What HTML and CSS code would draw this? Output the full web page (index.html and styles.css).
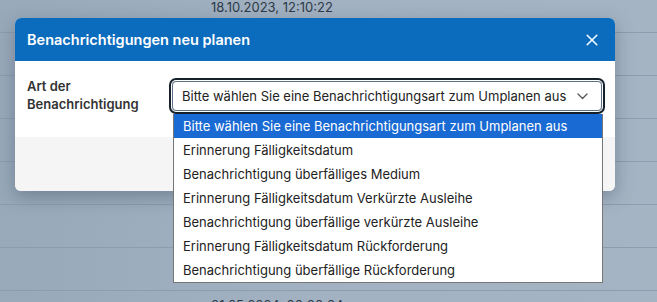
FILE: index.html
```html
<!DOCTYPE html>
<html lang="de">
<head>
<meta charset="utf-8">
<title>Benachrichtigungen neu planen</title>
<link rel="stylesheet" href="styles.css">
</head>
<body>
<div class="backdrop">
  <div class="row first"><span class="cell-date">18.10.2023, 12:10:22</span></div>
  <div class="row"></div>
  <div class="row"></div>
  <div class="row"></div>
  <div class="row"></div>
  <div class="row"></div>
  <div class="row"></div>
  <div class="row last"><span class="cell-date">01.05.2024, 00:00:04</span></div>
</div>

<div class="modal">
  <div class="modal-header">
    <h2 class="modal-title">Benachrichtigungen neu planen</h2>
    <svg class="close" width="12" height="12" viewBox="0 0 12 12"><path d="M1.2 1.2L10.8 10.8M10.8 1.2L1.2 10.8" stroke="#fff" stroke-width="1.5" stroke-linecap="round"/></svg>
  </div>
  <div class="modal-body">
    <label class="field-label">Art der<br>Benachrichtigung</label>
    <div class="select">
      <span class="select-text">Bitte wählen Sie eine Benachrichtigungsart zum Umplanen aus</span>
      <svg class="chevron" width="11" height="7" viewBox="0 0 11 7"><path d="M1 1L5.5 5.5L10 1" fill="none" stroke="#555" stroke-width="1.3" stroke-linecap="round" stroke-linejoin="round"/></svg>
    </div>
  </div>
  <div class="modal-footer"></div>
</div>

<ul class="options">
  <li class="option selected">Bitte wählen Sie eine Benachrichtigungsart zum Umplanen aus</li>
  <li class="option">Erinnerung Fälligkeitsdatum</li>
  <li class="option">Benachrichtigung überfälliges Medium</li>
  <li class="option">Erinnerung Fälligkeitsdatum Verkürzte Ausleihe</li>
  <li class="option">Benachrichtigung überfällige verkürzte Ausleihe</li>
  <li class="option">Erinnerung Fälligkeitsdatum Rückforderung</li>
  <li class="option">Benachrichtigung überfällige Rückforderung</li>
</ul>
</body>
</html>
```

FILE: styles.css
```css
html, body {
  margin: 0;
  padding: 0;
  width: 657px;
  height: 302px;
  overflow: hidden;
}
body {
  background: linear-gradient(90deg, #98a9ba 0%, #a2b2c2 50%, #a5b4c3 100%);
  font-family: Inter, "Noto Sans", "Liberation Sans", sans-serif;
  position: relative;
}
.backdrop {
  display: flex;
  flex-direction: column;
  height: 302px;
  overflow: hidden;
}
.row {
  height: 42px;
  border-bottom: 1px solid #8d9dad;
  flex: none;
  position: relative;
}
.row.first {
  height: 32px;
}
.row.last {
  border-bottom: none;
}
.cell-date {
  position: absolute;
  left: 211px;
  font-size: 13px;
  color: #2e3a47;
  line-height: 14px;
}
.row.first .cell-date { top: 0; }
.row.last .cell-date { top: 7px; }

.modal {
  position: absolute;
  left: 15px;
  top: 18px;
  width: 600px;
  border-radius: 6px;
  overflow: hidden;
  background: #fff;
  box-shadow: 0 6px 18px rgba(40, 55, 75, 0.35);
}
.modal-header {
  height: 43px;
  background: #0b6cbd;
  display: flex;
  align-items: center;
  justify-content: space-between;
  padding: 0 17px 0 12px;
}
.modal-title {
  margin: 0;
  font-size: 14.5px;
  font-weight: 600;
  color: #fff;
}
.modal-body {
  height: 76px;
  display: flex;
  align-items: flex-start;
  padding: 0 11px 0 12px;
  box-sizing: border-box;
}
.field-label {
  width: 145px;
  margin-top: 16px;
  font-size: 13px;
  line-height: 18px;
  font-weight: 600;
  color: #333;
}
.select {
  margin-top: 20px;
  width: 430px;
  height: 30px;
  box-sizing: border-box;
  border: 1px solid #5b7085;
  border-radius: 4px;
  box-shadow: 0 0 0 1px #fff, 0 0 0 3px #15202b;
  display: flex;
  align-items: center;
  justify-content: space-between;
  padding: 0 13px 0 9px;
}
.select-text {
  font-size: 13px;
  color: #222;
  white-space: nowrap;
}
.modal-footer {
  height: 54px;
  background: #f5f5f5;
}
.options {
  position: absolute;
  left: 173px;
  top: 114px;
  width: 430px;
  margin: 0;
  padding: 0;
  list-style: none;
  background: #fff;
  border: 1px solid #767676;
  border-top: none;
  box-sizing: border-box;
}
.option {
  height: 24px;
  line-height: 24px;
  padding-left: 9px;
  font-size: 13px;
  color: #222;
  white-space: nowrap;
}
.option.selected {
  background: #1a6ad3;
  color: #fff;
}
```
